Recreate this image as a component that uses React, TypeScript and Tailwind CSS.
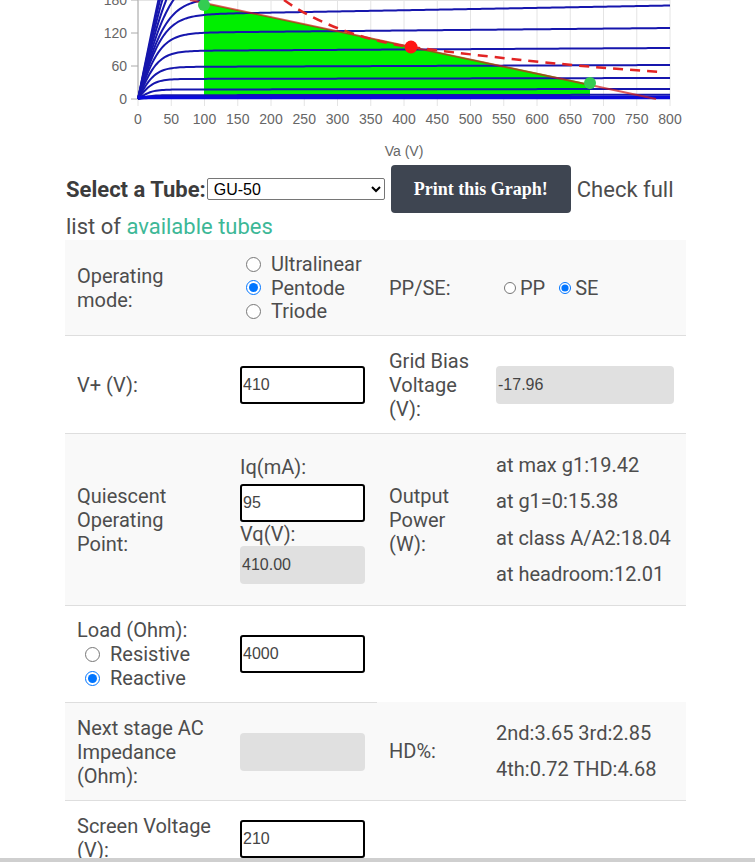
import React from 'react';

// chart space: v (volts) 0..800 -> x 138..670, mA -> 0.55px each, baseline y=99
const X0 = 138;
const X1 = 670;
const BASE = 99;
const vx = (v: number) => X0 + v * 0.665;

// [height at knee, height at 800V] in px above the baseline
const curves: [number, number][] = [
  [380, 390], [280, 290], [210, 220], [160, 170], [125, 135], [100, 108],
  [84, 93.5], [66, 71], [48, 51], [32, 34], [20, 21], [9.5, 10], [3.8, 4.2], [1.5, 1.8],
];

const curvePath = ([a, b]: [number, number]) => {
  const k = 12 + a * 0.17;
  const pts: string[] = [];
  for (let x = X0; x <= X1; x += 2) {
    const dx = x - X0;
    const plateau = a + ((b - a) * dx) / (X1 - X0);
    const y = BASE - plateau * Math.tanh(dx / k);
    pts.push(`${x},${y.toFixed(2)}`);
  }
  return 'M' + pts.join(' L');
};

const ticks = Array.from({ length: 17 }, (_, i) => i * 50);

const Chart = () => (
  <svg width={755} height={165} className="block" fontFamily="'Liberation Sans', Arial, sans-serif">
    {ticks.map((t) => (
      <line key={t} x1={vx(t)} x2={vx(t)} y1={0} y2={106} stroke="#e4e4e4" strokeWidth={1} />
    ))}
    <line x1={X0} x2={X1} y1={0.5} y2={0.5} stroke="#e4e4e4" />
    {[0, 33, 66, 99].map((y) => (
      <line key={y} x1={131} x2={X0} y1={y} y2={y} stroke="#aaa" strokeWidth={1} />
    ))}
    <line x1={X0} x2={X0} y1={0} y2={BASE} stroke="#aaa" />

    <polygon points="204,3 590,84 590,96 204,96" fill="#00ef00" />

    {curves.map((c, i) => (
      <path key={i} d={curvePath(c)} fill="none" stroke="#1616ad" strokeWidth={2} />
    ))}
    <line x1={X0} x2={X1} y1={97.5} y2={97.5} stroke="#0a0adc" strokeWidth={3.5} />

    <line x1={190} y1={0} x2={656} y2={99} stroke="#d01f1c" strokeOpacity={0.72} strokeWidth={2} />
    <path
      d="M284 0 C 320 26, 372 42, 411 47 S 560 66, 663 72"
      fill="none"
      stroke="#e22424"
      strokeWidth={2.5}
      strokeDasharray="10 7"
    />

    <circle cx={204} cy={5} r={6} fill="#34cc52" />
    <circle cx={590} cy={83} r={6} fill="#34cc52" />
    <circle cx={411} cy={47} r={6.5} fill="#ff1414" />

    {[
      ['0', 99],
      ['60', 66],
      ['120', 33],
      ['180', 0],
    ].map(([l, y]) => (
      <text key={l} x={127} y={(y as number) + 5} textAnchor="end" fontSize={14} fill="#666">
        {l}
      </text>
    ))}
    {ticks.map((t) => (
      <text key={t} x={vx(t)} y={124} textAnchor="middle" fontSize={14} fill="#666">
        {t}
      </text>
    ))}
    <text x={404} y={156} textAnchor="middle" fontSize={14} fill="#666">
      Va (V)
    </text>
  </svg>
);

const Radio = ({ checked, size = 15 }: { checked?: boolean; size?: number }) => (
  <input
    type="radio"
    checked={!!checked}
    readOnly
    className={size === 15 ? 'm-0 h-[15px] w-[15px] shrink-0' : 'm-0 h-[12px] w-[12px] shrink-0'}
  />
);

const Field = ({ value }: { value: string }) => (
  <input
    type="text"
    value={value}
    readOnly
    className="block h-[38px] w-[125px] rounded-[3px] border-2 border-black bg-white pl-[1px] font-['Liberation_Sans',Arial,sans-serif] text-[16px] text-[#444]"
  />
);

const Disabled = ({ value = '', w = 'w-[125px]' }: { value?: string; w?: string }) => (
  <div
    className={`flex h-[38px] ${w} items-center rounded-[4px] bg-[#e0e0e0] pl-[2px] font-['Liberation_Sans',Arial,sans-serif] text-[16px] text-[#444]`}
  >
    {value}
  </div>
);

const cols = 'grid grid-cols-[163px_149px_107px_202px] items-center';

export default function App() {
  return (
    <div className="relative h-[862px] overflow-hidden bg-white font-['Roboto','Liberation_Sans',sans-serif] text-[#4d4d4d]">
      <Chart />

      <div className="ml-[65px] w-[621px]">
        <div className="flex h-[48px] items-center">
          <span className="pl-[1px] text-[22px] font-bold text-[#3c3c3c]">Select a Tube:</span>
          <select
            defaultValue="GU-50"
            className="ml-[1px] h-[22px] w-[178px] rounded-[2px] border border-[#767676] bg-white pl-[2px] font-['Liberation_Sans',Arial,sans-serif] text-[16px] text-black"
          >
            <option>GU-50</option>
          </select>
          <button className="ml-[6px] h-[48px] w-[180px] rounded-[4px] bg-[#3e4551] font-['Liberation_Serif',serif] text-[18px] font-bold text-white">
            Print this Graph!
          </button>
          <span className="ml-[6px] text-[22px]">Check full</span>
        </div>
        <div className="h-[27px] pl-[1px] text-[22px] leading-[27px]">
          list of <a className="text-[#3db897]">available tubes</a>
        </div>

        <div className="text-[20px] leading-[24px]">
          {/* operating mode */}
          <div className={`${cols} h-[95px] bg-[#f9f9f9]`}>
            <div className="px-3">
              Operating
              <br />
              mode:
            </div>
            <div className="flex flex-col pl-[18px]">
              {[
                ['Ultralinear', false],
                ['Pentode', true],
                ['Triode', false],
              ].map(([l, c]) => (
                <label key={l as string} className="flex h-[23.5px] items-center gap-[10px]">
                  <Radio checked={c as boolean} />
                  {l}
                </label>
              ))}
            </div>
            <div className="px-3">PP/SE:</div>
            <div className="flex items-center pl-[20px]">
              <Radio size={12} />
              <span className="ml-[4px]">PP</span>
              <span className="ml-[14px] flex items-center">
                <Radio size={12} checked />
              </span>
              <span className="ml-[4px]">SE</span>
            </div>
          </div>

          {/* supply */}
          <div className={`${cols} h-[98px] border-t border-[#dedede]`}>
            <div className="px-3">V+ (V):</div>
            <div className="px-3">
              <Field value="410" />
            </div>
            <div className="px-3">
              Grid Bias
              <br />
              Voltage
              <br />
              (V):
            </div>
            <div className="px-3">
              <Disabled value="-17.96" w="w-[178px]" />
            </div>
          </div>

          {/* quiescent */}
          <div className={`${cols} h-[172px] border-t border-[#dedede] bg-[#f9f9f9]`}>
            <div className="px-3">
              Quiescent
              <br />
              Operating
              <br />
              Point:
            </div>
            <div className="px-3">
              <div>Iq(mA):</div>
              <div className="mt-[5px]">
                <Field value="95" />
              </div>
              <div>Vq(V):</div>
              <Disabled value="410.00" />
            </div>
            <div className="px-3">
              Output
              <br />
              Power
              <br />
              (W):
            </div>
            <div className="flex flex-col gap-[12.5px] whitespace-nowrap px-3">
              <div>at max g1:19.42</div>
              <div>at g1=0:15.38</div>
              <div>at class A/A2:18.04</div>
              <div>at headroom:12.01</div>
            </div>
          </div>

          {/* load */}
          <div className={`${cols} h-[97px] border-t border-[#dedede]`}>
            <div className="px-3">
              <div>Load (Ohm):</div>
              {[
                ['Resistive', false],
                ['Reactive', true],
              ].map(([l, c]) => (
                <label key={l as string} className="flex h-[24px] items-center gap-[10px] pl-[8px]">
                  <Radio checked={c as boolean} />
                  {l}
                </label>
              ))}
            </div>
            <div className="px-3">
              <Field value="4000" />
            </div>
          </div>

          {/* next stage */}
          <div className={`${cols} h-[98px] bg-[#f9f9f9]`}>
            <div className="flex h-full items-center border-t border-[#dedede] px-3">
              <div>
                Next stage AC
                <br />
                Impedance
                <br />
                (Ohm):
              </div>
            </div>
            <div className="flex h-full items-center border-t border-[#dedede] px-3">
              <Disabled />
            </div>
            <div className="px-3">HD%:</div>
            <div className="flex flex-col gap-[12px] whitespace-nowrap px-3">
              <div>2nd:3.65 3rd:2.85</div>
              <div>4th:0.72 THD:4.68</div>
            </div>
          </div>

          {/* screen */}
          <div className={`${cols} h-[80px] items-start border-t border-[#dedede]`}>
            <div className="px-3 pt-[13px]">
              Screen Voltage
              <br />
              (V):
            </div>
            <div className="px-3 pt-[19px]">
              <Field value="210" />
            </div>
          </div>
        </div>
      </div>

      <div className="fixed bottom-0 left-0 right-0 h-[4px] bg-[#cfcfcf]" />
    </div>
  );
}
